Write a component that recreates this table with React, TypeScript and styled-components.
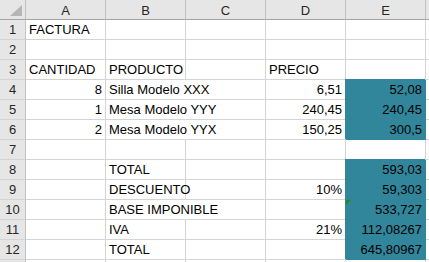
import { FC, Fragment } from 'react';
import styled, { createGlobalStyle } from 'styled-components';

const GlobalStyle = createGlobalStyle`
  html, body {
    margin: 0;
    padding: 0;
    background: #ffffff;
    overflow: hidden;
  }
  body {
    font-family: 'Liberation Sans', Arial, sans-serif;
  }
`;

const TEAL = '#31869b';
const GRID = '#d4d4d4';

const Sheet = styled.div`
  display: grid;
  grid-template-columns: 26px repeat(6, 80px);
  grid-auto-rows: 20px;
  width: 429px;
  height: 262px;
  overflow: hidden;
  background: #ffffff;
  font-size: 13px;
  color: #000;
`;

const Corner = styled.div`
  position: relative;
  background: #e6e6e6;
  border-right: 1px solid #c2c2c2;
  border-bottom: 1px solid #a5a5a5;
  &::after {
    content: '';
    position: absolute;
    right: 3px;
    bottom: 3px;
    width: 0;
    height: 0;
    border-left: 12px solid transparent;
    border-bottom: 11px solid #b5b5b5;
  }
`;

const ColHeader = styled.div`
  background: #e6e6e6;
  border-right: 1px solid #c2c2c2;
  border-bottom: 1px solid #a5a5a5;
  display: flex;
  align-items: center;
  justify-content: center;
  color: #262626;
  padding-top: 1px;
`;

const RowHeader = styled.div`
  background: #e6e6e6;
  border-right: 1px solid #c2c2c2;
  border-bottom: 1px solid ${GRID};
  display: flex;
  align-items: flex-end;
  justify-content: center;
  padding-bottom: 2px;
  color: #262626;
`;

// Spreadsheet cell: text spills into the next empty cell, so plain cells
// keep a transparent background and only filled cells paint colour.
const Cell = styled.div<{ $num?: boolean; $fill?: boolean; $spill?: boolean; $flag?: boolean }>`
  position: ${(p) => (p.$flag ? 'relative' : 'static')};
  background: ${(p) => (p.$fill ? TEAL : 'transparent')};
  border-right: 1px solid ${(p) => (p.$fill ? TEAL : p.$spill ? '#ffffff' : GRID)};
  border-bottom: 1px solid ${(p) => (p.$fill ? TEAL : GRID)};
  box-shadow: ${(p) => (p.$fill ? `-1px -1px 0 0 ${TEAL}` : 'none')};
  display: flex;
  align-items: flex-end;
  justify-content: ${(p) => (p.$num ? 'flex-end' : 'flex-start')};
  padding: 0 3px 2px 3px;
  white-space: nowrap;
  overflow: visible;
  &::before {
    content: '';
    display: ${(p) => (p.$flag ? 'block' : 'none')};
    position: absolute;
    left: 0;
    top: 0;
    width: 0;
    height: 0;
    border-top: 5px solid #1e8c1e;
    border-right: 5px solid transparent;
  }
`;

type Row = {
  a?: string;
  b?: string;
  c?: string;
  d?: string;
  e?: string;
  aNum?: boolean;
  dNum?: boolean;
  fill?: boolean;
  spill?: boolean;
  flag?: boolean;
};

const rows: Row[] = [
  { a: 'FACTURA' },
  {},
  { a: 'CANTIDAD', b: 'PRODUCTO', d: 'PRECIO' },
  { a: '8', aNum: true, b: 'Silla Modelo XXX', d: '6,51', dNum: true, e: '52,08', fill: true, spill: true },
  { a: '1', aNum: true, b: 'Mesa Modelo YYY', d: '240,45', dNum: true, e: '240,45', fill: true, spill: true },
  { a: '2', aNum: true, b: 'Mesa Modelo YYX', d: '150,25', dNum: true, e: '300,5', fill: true, spill: true },
  {},
  { b: 'TOTAL', e: '593,03', fill: true },
  { b: 'DESCUENTO', d: '10%', dNum: true, e: '59,303', fill: true },
  { b: 'BASE IMPONIBLE', e: '533,727', fill: true, spill: true, flag: true },
  { b: 'IVA', d: '21%', dNum: true, e: '112,08267', fill: true },
  { b: 'TOTAL', e: '645,80967', fill: true },
];

const App: FC = () => (
  <>
    <GlobalStyle />
    <Sheet>
      <Corner />
      {['A', 'B', 'C', 'D', 'E', ''].map((c, i) => (
        <ColHeader key={i}>{c}</ColHeader>
      ))}
      {rows.map((r, i) => (
        <Fragment key={i}>
          <RowHeader>{i + 1}</RowHeader>
          <Cell $num={r.aNum}>{r.a}</Cell>
          <Cell $spill={r.spill}>{r.b}</Cell>
          <Cell>{r.c}</Cell>
          <Cell $num={r.dNum}>{r.d}</Cell>
          <Cell $num $fill={r.fill} $flag={r.flag}>{r.e}</Cell>
          <Cell />
        </Fragment>
      ))}
      {/* row 13 only peeks in at the bottom edge */}
      <RowHeader />
      {[0, 1, 2, 3, 4, 5].map((k) => (
        <Cell key={k} />
      ))}
    </Sheet>
  </>
);

export default App;
